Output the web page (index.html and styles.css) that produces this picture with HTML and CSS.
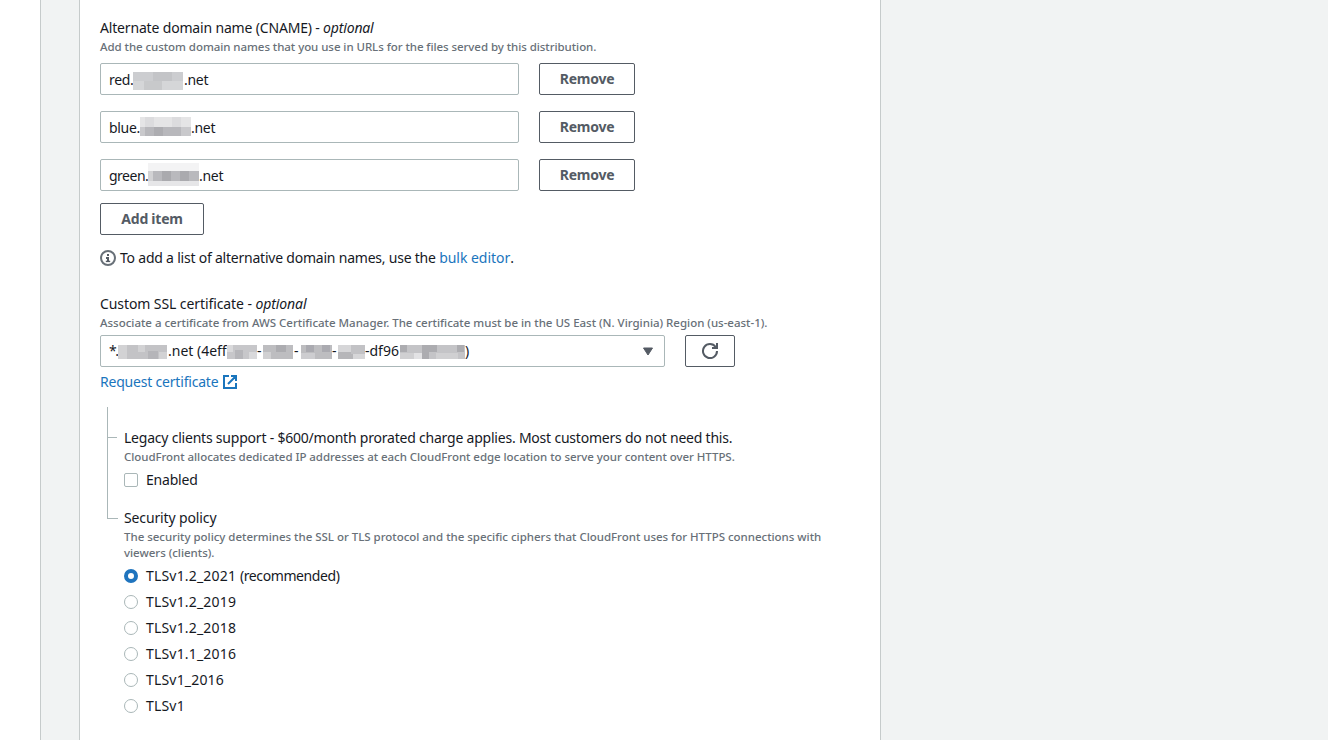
FILE: index.html
```
<!DOCTYPE html>
<html lang="en">
<head>
<meta charset="utf-8">
<title>Distribution settings</title>
<link rel="stylesheet" href="styles.css">
</head>
<body>
<div class="layout">
  <aside class="rail"></aside>
  <main class="panel">
    <section class="field">
      <div class="label l-cname">Alternate domain name (CNAME) - <em>optional</em></div>
      <div class="hint h-cname">Add the custom domain names that you use in URLs for the files served by this distribution.</div>
      <div class="rows">
        <div class="row">
          <div class="input"><span class="part w24">red.</span><svg class="mask low" width="51" height="18" viewBox="0 0 51 18" shape-rendering="crispEdges"><path fill="#cccdd0" d="M0 0h50v18H0z"/><path fill="#c3c4c7" d="M20 0h19v9H20z"/><path fill="#d5d6d8" d="M0 9h11v9H0zM29 9h21v9H29z"/><path fill="#c8c9cb" d="M11 9h18v9H11z"/></svg><span class="part">.net</span></div>
          <button class="button remove">Remove</button>
        </div>
        <div class="row">
          <div class="input"><span class="part w31">blue.</span><svg class="mask high" width="51" height="19" viewBox="0 0 51 19" shape-rendering="crispEdges"><path fill="#e5e5e6" d="M0 0h51v10H0z"/><path fill="#dcdcde" d="M5 0h9v10H5zM32 0h9v10h-9z"/><path fill="#b8b8bc" d="M0 10h51v9H0z"/><path fill="#adadb1" d="M14 10h9v9h-9z"/><path fill="#c9c9cc" d="M0 10h5v9H0zM41 10h10v9H41z"/></svg><span class="part">.net</span></div>
          <button class="button remove">Remove</button>
        </div>
        <div class="row">
          <div class="input"><span class="part w39 t-green">green.</span><svg class="mask high" width="51" height="23" viewBox="0 0 51 23" shape-rendering="crispEdges"><path fill="#f3f3f4" d="M0 0h51v8H0z"/><path fill="#b9b9bd" d="M0 8h51v10H0z"/><path fill="#d2d2d4" d="M0 8h5v10H0z"/><path fill="#aaaaae" d="M14 8h9v10h-9zM32 8h9v10h-9z"/><path fill="#e6e6e8" d="M0 18h51v5H0z"/></svg><span class="part">.net</span></div>
          <button class="button remove">Remove</button>
        </div>
      </div>
      <button class="button add">Add item</button>
      <div class="note">
        <svg class="info" width="16" height="16" viewBox="0 0 16 16" fill="none" stroke="#687078"><circle cx="8" cy="8" r="7" stroke-width="2"/><path stroke="#545b64" stroke-width="2" d="M7 5h2M6 8h2"/><path stroke="#545b64" stroke-width="2" d="M8 7v4"/><path stroke="#545b64" stroke-width="1.4" d="M5.8 11.4h4.4"/></svg>
        <span class="t-note">To add a list of alternative domain names, use the <a class="link t-bulk">bulk editor</a>.</span>
      </div>
    </section>

    <section class="field ssl">
      <div class="label l-ssl">Custom SSL certificate - <em>optional</em></div>
      <div class="hint h-ssl">Associate a certificate from AWS Certificate Manager. The certificate must be in the US East (N. Virginia) Region (us-east-1).</div>
      <div class="row select-row">
        <div class="input select">
          <span class="part w9 t-star">*.</span><svg class="mask" width="50" height="14" viewBox="0 0 50 14" shape-rendering="crispEdges"><path fill="#c3c3c6" d="M0 0h49v14H0z"/><path fill="#d2d2d4" d="M0 0h9v14H0zM20 0h7v7h-7zM41 7h8v7h-8z"/><path fill="#b5b5b9" d="M30 6h10v8H30z"/></svg><span class="part w59">.net (4eff</span><svg class="mask" width="30" height="14" viewBox="0 0 30 14" shape-rendering="crispEdges"><path fill="#c7c7ca" d="M0 0h30v14H0z"/><path fill="#d9d9db" d="M0 0h6v7H0zM22 7h8v7h-8z"/><path fill="#b6b6ba" d="M8 5h8v9H8z"/></svg><span class="part w6">-</span><svg class="mask" width="30" height="14" viewBox="0 0 30 14" shape-rendering="crispEdges"><path fill="#bdbdc0" d="M0 0h30v14H0z"/><path fill="#acacb0" d="M13 0h10v7H13z"/><path fill="#d0d0d2" d="M0 7h8v7H0z"/></svg><span class="part w8 t-dash">-</span><svg class="mask" width="31" height="14" viewBox="0 0 31 14" shape-rendering="crispEdges"><path fill="#bdbdc0" d="M0 0h31v14H0z"/><path fill="#aaaab0" d="M5 0h8v7H5zM21 0h8v7h-8z"/><path fill="#cdcdd0" d="M0 8h14v6H0z"/></svg><span class="part w6">-</span><svg class="mask" width="27" height="14" viewBox="0 0 27 14" shape-rendering="crispEdges"><path fill="#d6d6d8" d="M0 0h27v14H0z"/><path fill="#b6b6b9" d="M0 7h15v7H0z"/><path fill="#c2c2c5" d="M13 0h14v9H13z"/></svg><span class="part w35">-df96</span><svg class="mask" width="65" height="14" viewBox="0 0 65 14" shape-rendering="crispEdges"><path fill="#c4c4c7" d="M0 0h65v14H0z"/><path fill="#acacb0" d="M0 0h7v7H0zM22 0h7v14h-7zM29 0h8v7h-8zM57 0h7v7h-7z"/><path fill="#e2e2e4" d="M14 8h8v6h-8z"/><path fill="#d0d0d2" d="M0 8h14v6H0zM36 8h22v6H36z"/></svg><span class="part">)</span>
          <svg class="caret" width="10" height="9" viewBox="0 0 10 9"><path fill="#545b64" stroke="#545b64" stroke-linejoin="round" d="M.5 1h9L5 8z"/></svg>
        </div>
        <button class="button refresh" aria-label="Refresh"><svg width="16" height="16" viewBox="0 0 16 16" fill="none" stroke="#545b64" stroke-width="2"><path d="M10 5h5V0"/><path d="M15 8a7 7 0 1 1-1.3-4"/></svg></button>
      </div>
      <div class="request"><a class="link t-request">Request certificate</a><svg width="14" height="14" viewBox="0 0 14 14" fill="none" stroke="#1a75bd" stroke-width="2"><path d="M6 1H1v12h12V8M8 1h5v5M13 1L5 9"/></svg></div>
    </section>

    <section class="tree">
      <div class="branch first">
        <div class="label l-legacy">Legacy clients support - $600/month prorated charge applies. Most customers do not need this.</div>
        <div class="hint h-legacy">CloudFront allocates dedicated IP addresses at each CloudFront edge location to serve your content over HTTPS.</div>
        <label class="option check"><span class="box"></span><span class="t-enabled">Enabled</span></label>
      </div>
      <div class="branch last">
        <div class="label l-policy">Security policy</div>
        <div class="hint h-policy">The security policy determines the SSL or TLS protocol and the specific ciphers that CloudFront uses for HTTPS connections with<br>viewers (clients).</div>
        <div class="options">
          <label class="option"><span class="radio on"></span><span class="t-tls">TLSv1.2_2021 <span class="t-rec">(recommended)</span></span></label>
          <label class="option"><span class="radio"></span><span class="t-tls">TLSv1.2_2019</span></label>
          <label class="option"><span class="radio"></span><span class="t-tls">TLSv1.2_2018</span></label>
          <label class="option"><span class="radio"></span><span class="t-tls">TLSv1.1_2016</span></label>
          <label class="option"><span class="radio"></span><span class="t-tls">TLSv1_2016</span></label>
          <label class="option"><span class="radio"></span><span class="t-tls">TLSv1</span></label>
        </div>
      </div>
    </section>
  </main>
</div>
</body>
</html>
```
FILE: styles.css
```
* { box-sizing: border-box; }
body {
  margin: 0;
  background: #f1f3f3;
  color: #16191f;
  font: 14px/22px "Noto Sans", "Open Sans", sans-serif;
  letter-spacing: -0.3px;
  overflow: hidden;
}
.layout { display: flex; height: 740px; }
.rail { width: 41px; background: #fff; border-right: 1px solid #c6cbcb; }
.panel {
  width: 802px;
  margin-left: 38px;
  padding: 17px 20px 0;
  background: #fff;
  border: solid #c6cbcb;
  border-width: 0 1px;
}
.label, .hint, .part, .option, .note { white-space: nowrap; }
.hint { font-size: 11.5px; line-height: 16px; color: #687078; font-weight: 500; }
.l-cname { letter-spacing: -0.17px; }
.l-ssl { letter-spacing: -0.09px; }
.l-legacy { letter-spacing: -0.215px; }
.l-policy { letter-spacing: -0.13px; }
.h-cname { letter-spacing: -0.06px; }
.h-ssl { letter-spacing: -0.015px; }
.h-legacy { letter-spacing: -0.053px; }
.h-policy { letter-spacing: -0.023px; }
.t-note { letter-spacing: -0.22px; }
.t-bulk { letter-spacing: -0.03px; }
.t-request { letter-spacing: -0.2px; }
.t-enabled { letter-spacing: -0.2px; }
.t-tls { letter-spacing: 0.18px; }
.t-rec { letter-spacing: -0.4px; }
.t-green { letter-spacing: -0.5px; }
.t-star { letter-spacing: -1.4px; }
.rows { display: flex; flex-direction: column; gap: 16px; margin-top: 8px; }
.row { display: flex; gap: 20px; }
.input {
  width: 419px;
  height: 32px;
  padding: 0 8px;
  display: flex;
  align-items: center;
  border: 1px solid #aab7b8;
  border-radius: 2px;
  background: #fff;
}
.input .part { padding-top: 1px; }
.mask { flex: none; }
.mask.low { margin-top: 4px; }
.mask.high { margin-bottom: 1px; }
.part { flex: none; }
.w6 { width: 6px; }
.w8 { width: 8px; }
.w9 { width: 9px; }
.w24 { width: 24px; }
.w31 { width: 31px; }
.w35 { width: 35px; }
.w39 { width: 39px; }
.w59 { width: 59px; }
.t-dash { padding-left: 1px; }
.button {
  height: 32px;
  padding: 0;
  border: 1px solid #545b64;
  border-radius: 2px;
  background: #fff;
  color: #545b64;
  font: 700 14px/22px "Noto Sans", "Open Sans", sans-serif;
  letter-spacing: -0.25px;
  display: flex;
  align-items: center;
  justify-content: center;
}
.remove { width: 96px; }
.add { width: 104px; margin-top: 12px; }
.note { display: flex; align-items: center; gap: 4px; margin-top: 12px; }
.link { color: #1a75bd; }
.ssl { margin-top: 24px; }
.select-row { margin-top: 4px; }
.select { width: 565px; letter-spacing: 0; }
.select .part { padding-top: 0; }
.select .mask { margin-top: 2px; }
.caret { margin-left: auto; margin-right: 3px; }
.refresh { width: 50px; }
.request { display: flex; align-items: center; gap: 5px; margin-top: 4px; }
.tree { margin: 14px 0 0 7px; }
.branch { position: relative; padding-left: 17px; }
.first { height: 100px; padding-top: 20px; border-left: 1px solid #aab7b8; padding-left: 16px; }
.branch::before {
  content: "";
  position: absolute;
  left: 0;
  top: 30px;
  width: 9px;
  border-top: 1px solid #aab7b8;
}
.last::before {
  top: 0;
  width: 10px;
  height: 11px;
  border-top: 0;
  border-left: 1px solid #aab7b8;
  border-bottom: 1px solid #aab7b8;
}
.option { display: flex; align-items: center; gap: 8px; }
.check { margin-top: 4px; }
.options { display: flex; flex-direction: column; gap: 4px; margin-top: 4px; }
.box, .radio { width: 14px; height: 14px; border: 1px solid #aab7b8; border-radius: 2px; background: #fff; }
.radio { border-radius: 50%; }
.radio.on { border: 4px solid #1f74be; }
```
